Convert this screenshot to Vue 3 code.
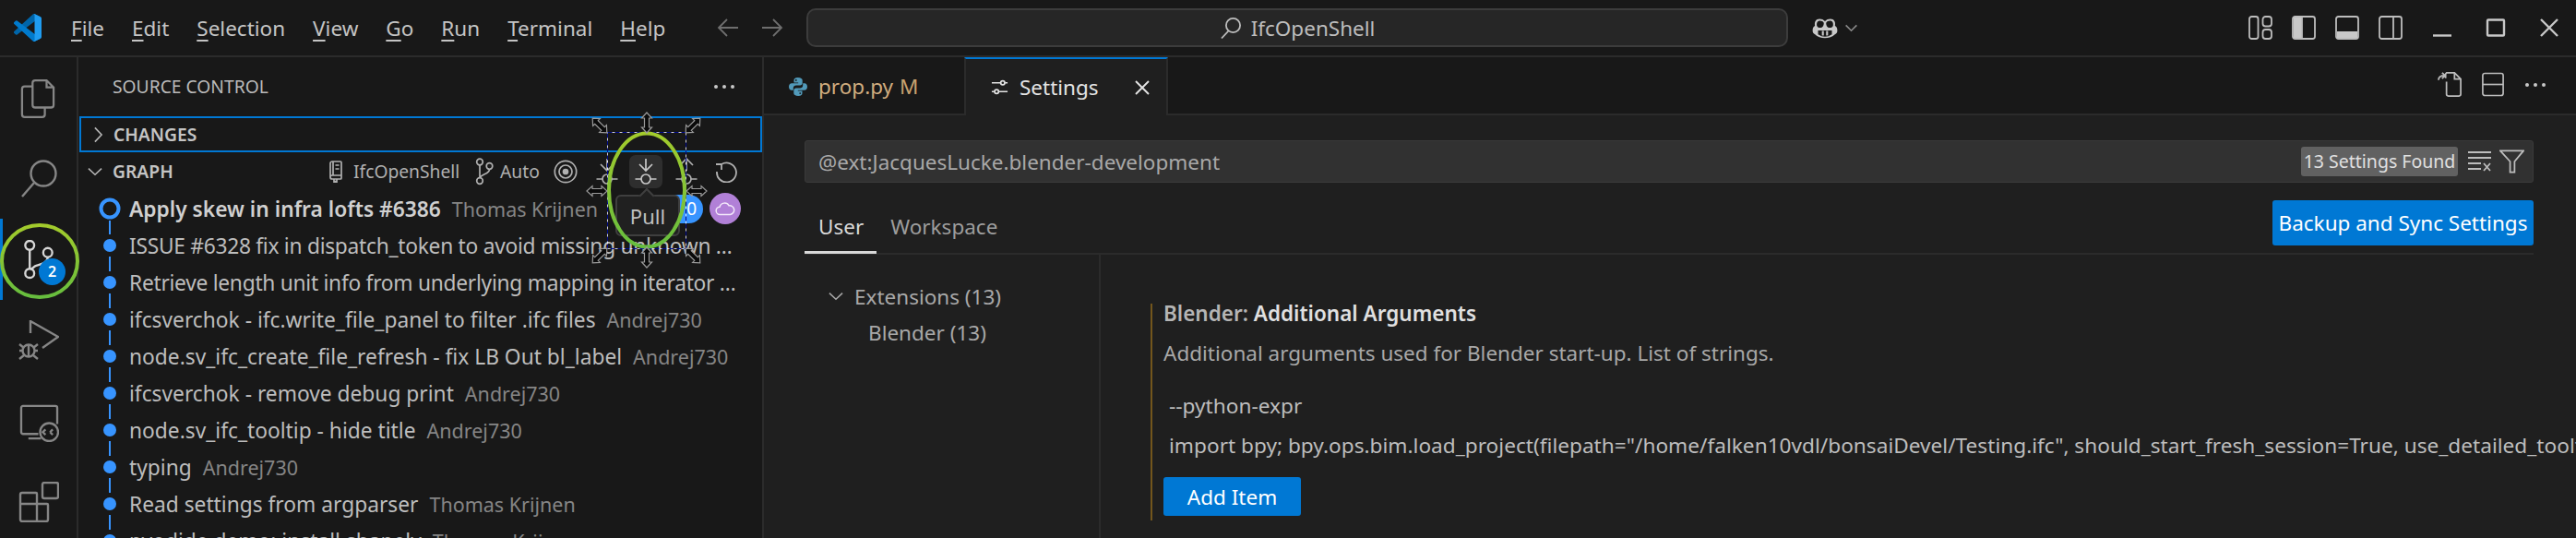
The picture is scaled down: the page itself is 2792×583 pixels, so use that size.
<script setup>
const menus = [['F','ile'],['E','dit'],['S','election'],['V','iew'],['G','o'],['R','un'],['T','erminal'],['H','elp']]
const commits = [
  { t: 'ISSUE #6328 fix in dispatch_token to avoid missing unknown …', a: '', trim: true },
  { t: 'Retrieve length unit info from underlying mapping in iterator …', a: '', trim: true },
  { t: 'ifcsverchok - ifc.write_file_panel to filter .ifc files', a: 'Andrej730' },
  { t: 'node.sv_ifc_create_file_refresh - fix LB Out bl_label', a: 'Andrej730' },
  { t: 'ifcsverchok - remove debug print', a: 'Andrej730' },
  { t: 'node.sv_ifc_tooltip - hide title', a: 'Andrej730' },
  { t: 'typing', a: 'Andrej730' },
  { t: 'Read settings from argparser', a: 'Thomas Krijnen' },
  { t: 'pyodide demo: install shapely', a: 'Thomas Krijnen' }
]
const handles = [
  { x: 650, y: 136, r: 45 }, { x: 701, y: 133, r: 90 }, { x: 751, y: 136, r: -45 },
  { x: 647, y: 207, r: 0 }, { x: 755, y: 207, r: 0 },
  { x: 650, y: 277, r: -45 }, { x: 701, y: 279, r: 90 }, { x: 751, y: 277, r: 45 }
]
</script>

<template>
  <div class="app">
    <header class="title">
      <svg class="logo" viewBox="0 0 100 100">
        <path fill="#0065a9" d="M96.46 10.8 75.86.87a6.23 6.23 0 0 0-7.11 1.2L1.3 63.59a4.17 4.17 0 0 0 0 6.16l5.51 5.01a4.17 4.17 0 0 0 5.32.24L93.37 13.37c2.73-2.07 6.63-.13 6.63 3.3v-.24c0-2.4-1.37-4.59-3.54-5.63z"/>
        <path fill="#007acc" d="m96.46 89.2-20.6 9.92a6.23 6.23 0 0 1-7.11-1.2L1.3 36.41a4.17 4.17 0 0 1 0-6.16l5.51-5.01a4.17 4.17 0 0 1 5.32-.24l81.24 61.63c2.73 2.07 6.63.13 6.63-3.3v.24c0 2.4-1.37 4.59-3.54 5.63z"/>
        <path fill="#1f9cf0" d="M75.86 99.13a6.23 6.23 0 0 1-7.11-1.21c2.31 2.31 6.25.67 6.25-2.59V4.67c0-3.26-3.94-4.9-6.25-2.59a6.23 6.23 0 0 1 7.11-1.21l20.6 9.91A6.25 6.25 0 0 1 100 16.4v67.2a6.25 6.25 0 0 1-3.54 5.63l-20.6 9.9z"/>
      </svg>
      <nav class="menu">
        <span v-for="m in menus" :key="m[1]"><u>{{ m[0] }}</u>{{ m[1] }}</span>
      </nav>
      <svg class="nav-arrow back" viewBox="0 0 24 24"><path d="M23 12H2M11 3l-9 9 9 9"/></svg>
      <svg class="nav-arrow" viewBox="0 0 24 24"><path d="M1 12h21M13 3l9 9-9 9"/></svg>
      <div class="command">
        <svg viewBox="0 0 24 24" class="cmd-icon"><circle cx="14.5" cy="9" r="7.6"/><path d="M9.5 15 2 23"/></svg>
        <span>IfcOpenShell</span>
      </div>
      <svg class="copilot" viewBox="0 0 36 30">
        <path d="M5 12c-1-5 1-9 6-9 3 0 5 1 7 3 2-2 4-3 7-3 5 0 7 4 6 9 2 1 3 3 3 5v2c0 2-1 3-3 4-3 3-8 5-13 5S8 26 5 23c-2-1-3-2-3-4v-2c0-2 1-4 3-5z"/>
        <path class="cut" d="M7.5 12c-.7-4 .8-6.5 4-6.5 2.400 0 4 1 5 2.500 0 3-1 6.500-5 6.500-2 0-3.500-1-4-2.500zM28.500 12c.7-4-.8-6.500-4-6.500-2.400 0-4 1-5 2.500 0 3 1 6.500 5 6.500 2 0 3.500-1 4-2.500zM9 18h18v5c-3 2-6 3-9 3s-6-1-9-3z"/>
        <path d="M14 18.500h2.500v6H14zM19.500 18.500H22v6h-2.500z"/>
      </svg>
      <svg class="chev" viewBox="0 0 16 10"><path d="M1.500 1.500 8 8l6.500-6.500"/></svg>
      <svg class="lay lay-first" viewBox="0 0 26 26"><rect x="1" y="1" width="9.500" height="24" rx="2.500"/><rect x="15.500" y="1" width="9.500" height="10.500" rx="3"/><rect x="15.500" y="15" width="9.500" height="10" rx="3"/></svg>
      <svg class="lay" viewBox="0 0 26 26"><rect x="1" y="1" width="24" height="24" rx="2.500"/><path class="fill" d="M2 2h9v22H2z"/><path d="M11 1v24"/></svg>
      <svg class="lay" viewBox="0 0 26 26"><rect x="1" y="1" width="24" height="24" rx="2.500"/><path class="fill" d="M2 17h22v7H2z"/></svg>
      <svg class="lay" viewBox="0 0 26 26"><rect x="1" y="1" width="24" height="24" rx="2.500"/><path d="M16 1v24"/></svg>
      <svg class="win win-min" viewBox="0 0 22 20"><path d="M1 18.500h20"/></svg>
      <svg class="win" viewBox="0 0 22 20"><rect x="2" y="1.500" width="18" height="17" rx="1"/></svg>
      <svg class="win" viewBox="0 0 22 20"><path d="m2 1 18 18M20 1 2 19"/></svg>
    </header>

    <div class="main">
      <aside class="activity">
        <svg viewBox="0 0 40 46" class="act"><path d="M14 12V5a3 3 0 0 1 3-3h13l8 8v20a3 3 0 0 1-3 3H17a3 3 0 0 1-3-3z M30 2v8h8"/><path d="M14 9H5a3 3 0 0 0-3 3v29a3 3 0 0 0 3 3h20a3 3 0 0 0 3-3v-8"/></svg>
        <svg viewBox="0 0 40 42" class="act s"><circle cx="25" cy="15" r="13.500"/><path d="M15 25 2 40"/></svg>
        <div class="git">
          <svg viewBox="0 0 33 44" class="act on"><circle cx="7" cy="6" r="5"/><circle cx="7" cy="37" r="5"/><circle cx="27" cy="14" r="5"/><path d="M7 11v21M27 19c0 7-8 8-14 10l-5 4"/></svg>
          <span class="gitbadge">2</span>
        </div>
        <svg viewBox="0 0 44 44" class="act d"><path d="M13 14V1l30 17-17 12"/><circle cx="11" cy="33" r="6.500"/><path d="M11 26v14M1 26l5 4M21 26l-5 4M1 33h4M21 33h-4M1 42l5-4M21 42l-5-4"/></svg>
        <svg viewBox="0 0 44 42" class="act r"><path d="M21 33H4a2 2 0 0 1-2-2V4a2 2 0 0 1 2-2h36a2 2 0 0 1 2 2v18M10 38h14"/><circle cx="33" cy="31" r="10"/><path d="m29 28-3 3 3 3M37 28l-3 3M34 31l3 3" /></svg>
        <svg viewBox="0 0 44 44" class="act e"><rect x="26" y="1" width="17" height="17" rx="2"/><path d="M4 12h15a1 1 0 0 1 1 1v11h11a1 1 0 0 1 1 1v16a2 2 0 0 1-2 2H4a2 2 0 0 1-2-2V14a2 2 0 0 1 2-2zM2 24h18v19M2 24"/></svg>
      </aside>

      <section class="side">
        <div class="side-head"><span>SOURCE CONTROL</span><i class="dots"><b></b><b></b><b></b></i></div>
        <div class="changes">
          <svg class="tw r1" viewBox="0 0 12 20"><path d="M2 1.500 10 10l-8 8.500"/></svg>
          <span>CHANGES</span>
        </div>
        <div class="graph">
          <svg class="tw d1" viewBox="0 0 20 12"><path d="M1.500 2 10 10l8.500-8"/></svg>
          <span class="gname">GRAPH</span>
          <svg class="gi repo" viewBox="0 0 14 24"><path d="M3 1h9a1 1 0 0 1 1 1v17a1 1 0 0 1-1 1H3a2 2 0 0 1-2-2V3a2 2 0 0 1 2-2zM1 17.500c0-1 1-1.500 2-1.500h10M4 1v15M6.500 5h4M6.500 9h4M5 20v3.500l1.500-1 1.500 1V20"/></svg>
          <span class="gtext">IfcOpenShell</span>
          <svg class="gi branch" viewBox="0 0 20 30"><circle cx="5" cy="4.500" r="3.300"/><circle cx="5" cy="25" r="3.300"/><circle cx="15.500" cy="9" r="3.300"/><path d="M5 8v13.500M15.500 12.500c0 5-8 5-10.500 9"/></svg>
          <span class="gtext auto">Auto</span>
          <svg class="gi target" viewBox="0 0 26 26"><circle cx="13" cy="13" r="11.700"/><circle cx="13" cy="13" r="7"/><circle class="solid" cx="13" cy="13" r="2.500"/></svg>
          <svg class="gi arrow fetch" viewBox="0 0 36 36"><path d="M18 4v13M11 10l7 7 7-7"/><circle cx="18" cy="26" r="5"/><path d="M6.500 26H13M23 26h6.500"/></svg>
          <span class="pullbtn"><svg class="gi" viewBox="0 0 36 36"><path d="M18 4v13M11 10l7 7 7-7"/><circle cx="18" cy="26" r="5"/><path d="M6.500 26H13M23 26h6.500"/></svg></span>
          <svg class="gi arrow push" viewBox="0 0 36 36"><path d="M18 17V4M11 11l7-7 7 7"/><circle cx="18" cy="26" r="5"/><path d="M6.500 26H13M23 26h6.500"/></svg>
          <svg class="gi refresh" viewBox="0 0 24 24"><path d="M7 4a10.500 10.500 0 1 1-5 8M7 10V4H1"/></svg>
        </div>

        <div class="row lead">
          <svg class="rail" viewBox="0 0 24 40"><circle class="ring" cx="12" cy="20" r="9.500"/><path d="M12 33v7"/></svg>
          <span class="msg bold">Apply skew in infra lofts #6386</span>
          <span class="who">Thomas Krijnen</span>
          <span class="pill">0</span>
          <span class="cloud"><svg viewBox="0 0 24 16"><path d="M6 14.500a4.500 4.500 0 0 1-.5-9A6 6 0 0 1 16.500 4 5.300 5.300 0 0 1 18 14.500z"/></svg></span>
        </div>
        <div v-for="c in commits" :key="c.t" class="row">
          <svg class="rail" viewBox="0 0 24 40"><circle class="dot" cx="12" cy="20" r="7"/><path d="M12 0v8M12 32v8"/></svg>
          <span class="msg" :class="{ trim: c.trim }">{{ c.t }}</span>
          <span v-if="c.a" class="who">{{ c.a }}</span>
        </div>

        <div class="tip"><span>Pull</span></div>
      </section>

      <section class="editor">
        <div class="tabs">
          <div class="tab idle">
            <svg class="py" viewBox="0 0 20 20"><path fill="#519aba" d="M9.800 0C6.500 0 5.500 1.400 5.500 3v2.500h4.700v.8H3.200C1.300 6.300 0 7.800 0 10s1.300 3.800 3 3.800h1.800v-2.300c0-1.700 1.400-3 3.200-3h4.200c1.300 0 2.500-1.100 2.500-2.500V3c0-1.600-1.700-3-4.900-3zM7.800 2a.9.900 0 1 1 0 1.800.9.900 0 0 1 0-1.800z"/><path fill="#519aba" d="M10.200 20c3.300 0 4.300-1.400 4.300-3v-2.500H9.800v-.8h7c1.900 0 3.200-1.500 3.200-3.700s-1.300-3.800-3-3.800h-1.800v2.300c0 1.700-1.400 3-3.200 3H7.800c-1.300 0-2.500 1.100-2.500 2.500V17c0 1.600 1.700 3 4.900 3zm2-2a.9.900 0 1 1 0-1.800.9.900 0 0 1 0 1.800z"/></svg>
            <span class="pname">prop.py</span><span class="pm">M</span>
          </div>
          <div class="tab active">
            <svg class="sl" viewBox="0 0 20 22"><path d="M1 6h10M16 6h3M1 16h3M9 16h10"/><circle cx="13.500" cy="6" r="2.300"/><circle cx="6.500" cy="16" r="2.300"/></svg>
            <span>Settings</span>
            <svg class="x" viewBox="0 0 16 16"><path d="m1 1 14 14M15 1 1 15"/></svg>
          </div>
          <div class="tab-actions">
            <svg class="ea" viewBox="0 0 28 28"><path d="M9 7V3a2 2 0 0 1 1-2h9l7 7v17a2 2 0 0 1-2 2H12a2 2 0 0 1-2-2V11M19 1v7h7M1 9c0-4 3-5 7-5M5 1l3.500 3L5 7.500"/></svg>
            <svg class="ea" viewBox="0 0 26 28"><rect x="1" y="1" width="24" height="26" rx="2.500"/><path d="M1 14h24"/></svg>
            <i class="dots"><b></b><b></b><b></b></i>
          </div>
        </div>

        <div class="settings">
          <div class="search">
            <span class="query">@ext:JacquesLucke.blender-development</span>
            <span class="found">13 Settings Found</span>
            <svg class="clr" viewBox="0 0 26 24"><path d="M1 2h25M1 8h25M1 14h14M1 20h14M18 14l7 8M25 14l-7 8"/></svg>
            <svg class="flt" viewBox="0 0 28 26"><path d="M1 1h26L17 13v12h-5V13z"/></svg>
          </div>
          <div class="scope">
            <span class="sc on">User</span>
            <span class="sc">Workspace</span>
            <button class="btn sync">Backup and Sync Settings</button>
          </div>
          <div class="body">
            <div class="tree">
              <div class="t1"><svg class="tw d2" viewBox="0 0 20 12"><path d="M1.500 2 10 10l8.500-8"/></svg>Extensions (13)</div>
              <div class="t2">Blender (13)</div>
            </div>
            <div class="detail">
              <div class="item">
                <div class="h"><span class="cat">Blender: </span><b>Additional Arguments</b></div>
                <div class="desc">Additional arguments used for Blender start-up. List of strings.</div>
                <div class="val v1">--python-expr</div>
                <div class="val">import bpy; bpy.ops.bim.load_project(filepath="/home/falken10vdl/bonsaiDevel/Testing.ifc", should_start_fresh_session=True, use_detailed_tooltips=True)</div>
                <button class="btn add">Add Item</button>
              </div>
            </div>
          </div>
        </div>
      </section>
    </div>

    <svg class="anno" viewBox="0 0 2792 583">
      <defs>
        <linearGradient id="g" x1="0" y1="0" x2="0" y2="1"><stop offset="0" stop-color="#a3cb2c"/><stop offset="1" stop-color="#66bd3e"/></linearGradient>
        <path id="ar" d="M-11 0-5-5.500v3h10v-3l6 5.500-6 5.500v-3H-5v3z"/>
      </defs>
      <rect class="sel-a" x="658.500" y="143.500" width="85" height="126"/>
      <rect class="sel-b" x="658.500" y="143.500" width="85" height="126"/>
      <ellipse class="ring-g" cx="701" cy="206" rx="41" ry="61.500"/>
      <ellipse class="ring-g" cx="43" cy="283" rx="41" ry="39"/>
      <use v-for="(h, i) in handles" :key="i" href="#ar" class="handle" :transform="`translate(${h.x} ${h.y}) rotate(${h.r})`"/>
    </svg>
  </div>
</template>

<style>
html, body { margin: 0; background: #181818; }
</style>

<style scoped>
.app {
  position: relative;
  width: 2792px;
  height: 583px;
  overflow: hidden;
  background: #181818;
  color: #ccc;
  font-family: "Noto Sans", "Open Sans", sans-serif;
  font-size: 22.5px;
}
svg { fill: none; stroke: currentColor; flex: none; display: block; }

/* title bar */
.title {
  display: flex;
  align-items: center;
  height: 60px;
  border-bottom: 2px solid #2b2b2b;
  padding-left: 15px;
  color: #bdbdbd;
}
.logo { width: 30px; height: 30px; stroke: none; }
.logo path { stroke: none; }
.menu { display: flex; gap: 30px; margin-left: 32px; width: 660px; flex: none; white-space: nowrap; color: #c4c4c4; }
.menu u { text-underline-offset: 4px; text-decoration-thickness: 2px; }
.nav-arrow { width: 24px; height: 24px; margin-left: 24px; color: #6e6e6e; stroke-width: 1.800; }
.nav-arrow.back { margin-left: 40px; }
.command {
  box-sizing: border-box;
  width: 1064px;
  height: 42px;
  flex: none;
  margin-left: 25px;
  border: 2px solid #3c3c3c;
  border-radius: 10px;
  background: #262626;
  display: flex;
  align-items: center;
  justify-content: center;
  gap: 10px;
}
.cmd-icon { width: 24px; height: 27px; stroke-width: 1.800; }
.copilot { width: 30px; height: 25px; margin-left: 25px; stroke: none; fill: #c8c8c8; }
.copilot path { stroke: none; }
.copilot .cut { fill: #181818; }
.copilot path:last-child { fill: #c8c8c8; }
.chev { width: 15px; height: 9px; margin-left: 6px; color: #8a8a8a; stroke-width: 1.800; }
.lay { width: 26px; height: 26px; margin-left: 21px; color: #bdbdbd; stroke-width: 1.800; }
.lay-first { margin-left: 423px; }
.lay .fill { fill: #c8c8c8; stroke: none; }
.win { width: 22px; height: 20px; margin-left: 36px; color: #c8c8c8; stroke-width: 2.400; }
.win-min { margin-left: 32px; }

/* main */
.main { display: flex; height: 521px; }
.activity {
  box-sizing: border-box;
  width: 85px;
  border-right: 2px solid #2b2b2b;
  display: flex;
  flex-direction: column;
  align-items: flex-start;
  color: #868686;
  flex: none;
  position: relative;
}
.act { stroke-width: 2.400; }
.activity > svg:nth-child(1) { width: 38px; height: 44px; margin: 23px 0 0 22px; }
.act.s { width: 40px; height: 42px; margin: 44px 0 0 22px; }
.git {
  position: relative;
  height: 88px;
  width: 83px;
  margin-top: 22px;
  border-left: 3px solid #0078d4;
  box-sizing: border-box;
}
.act.on { width: 33px; height: 43px; color: #d7d7d7; margin: 23px 0 0 22px; }
.gitbadge {
  position: absolute;
  left: 39px;
  top: 43px;
  width: 29px;
  height: 29px;
  border-radius: 50%;
  background: #0078d4;
  color: #fff;
  font-size: 16px;
  font-weight: 600;
  line-height: 29px;
  text-align: center;
}
.act.d { width: 44px; height: 44px; margin: 22px 0 0 20px; }
.act.r { width: 43px; height: 41px; margin: 47px 0 0 21px; }
.act.e { width: 44px; height: 44px; margin: 43px 0 0 20px; }

/* sidebar */
.side { position: relative; width: 741px; flex: none; border-right: 2px solid #2b2b2b; }
.side-head {
  height: 64px;
  display: flex;
  align-items: center;
  padding: 0 30px 1px 37px;
  box-sizing: border-box;
  font-size: 19.250px;
  color: #bbb;
  justify-content: space-between;
}
.dots { display: flex; gap: 5px; }
.dots b { width: 4px; height: 4px; border-radius: 50%; background: #c8c8c8; }
.changes {
  height: 39px;
  box-sizing: border-box;
  margin-left: 1px;
  border: 2px solid #0078d4;
  display: flex;
  align-items: center;
  font-size: 19.250px;
  font-weight: 600;
  color: #c4c4c4;
}
.tw { color: #b5b5b5; stroke-width: 1.800; }
.r1 { width: 11px; height: 18px; margin: 0 11px 0 13px; }
.graph {
  display: flex;
  align-items: center;
  height: 41px;
  font-size: 19.250px;
  color: #b0b0b0;
  position: relative;
}
.d1 { width: 18px; height: 10px; margin: 0 10px 0 9px; }
.gname { font-weight: 600; color: #c4c4c4; width: 235px; }
.gi { color: #b0b0b0; stroke-width: 1.700; }
.repo { width: 14px; height: 24px; margin-right: 12px; }
.gtext { white-space: nowrap; width: 132px; }
.branch { width: 20px; height: 30px; }
.auto { width: 58px; margin-left: 7px; }
.target { width: 26px; height: 26px; }
.target .solid { fill: #b0b0b0; }
.arrow { width: 36px; height: 36px; }
.fetch { margin-left: 14px; }
.pullbtn { width: 36px; height: 36px; margin-left: 6px; border-radius: 7px; background: #2e2e2e; }
.pullbtn .gi { width: 36px; height: 36px; color: #c8c8c8; }
.push { margin-left: 8px; }
.refresh { width: 24px; height: 24px; margin-left: 13px; stroke-width: 1.800; }

.row {
  display: flex;
  align-items: center;
  height: 40px;
  padding-left: 22px;
  padding-right: 23px;
  white-space: nowrap;
  color: #bdbdbd;
  font-size: 22.750px;
}
.rail { width: 24px; height: 40px; margin-right: 9px; color: #3794ff; stroke-width: 2; }
.rail .dot { fill: #3794ff; stroke: none; }
.rail .ring { stroke-width: 4; }
.msg { min-width: 0; }
.trim { letter-spacing: -.27px; }
.bold { font-weight: 600; color: #d0d0d0; flex: none; }
.who { margin-left: 12px; color: #858585; flex: none; font-size: 21.500px; }
.pill {
  margin-left: auto;
  width: 42px;
  height: 31px;
  border-radius: 16px;
  background: #3794ff;
  color: #fff;
  line-height: 31px;
  text-align: right;
  padding-right: 7px;
  box-sizing: border-box;
  font-size: 19px;
}
.cloud {
  width: 34px;
  height: 34px;
  margin-left: 7px;
  border-radius: 50%;
  background: #b180d7;
  display: flex;
  align-items: center;
  justify-content: center;
  color: #f3e8fa;
}
.cloud svg { width: 22px; height: 15px; stroke-width: 1.600; }

.tip {
  position: absolute;
  left: 582px;
  top: 149px;
  width: 70px;
  height: 45px;
  box-sizing: border-box;
  background: #202020;
  border: 2px solid #3f3f3f;
  border-radius: 6px;
  display: flex;
  align-items: center;
  justify-content: center;
  color: #c0c0c0;
  font-size: 22px;
}
.tip::before {
  content: "";
  position: absolute;
  left: 26px;
  top: -7px;
  width: 10px;
  height: 10px;
  background: #202020;
  border-left: 2px solid #3f3f3f;
  border-top: 2px solid #3f3f3f;
  transform: rotate(45deg);
}

/* editor */
.editor { flex: 1; min-width: 0; background: #1f1f1f; display: flex; flex-direction: column; }
.tabs { height: 63px; display: flex; background: #181818; box-sizing: border-box; border-bottom: 2px solid #2b2b2b; }
.tab { display: flex; align-items: center; height: 63px; box-sizing: border-box; white-space: nowrap; }
.idle { width: 217px; padding-left: 27px; }
.py { width: 20px; height: 20px; stroke: none; }
.py path { stroke: none; }
.pname { margin-left: 12px; color: #d1ad7f; }
.pm { margin-left: 7px; color: #c8a16f; }
.active {
  width: 221px;
  padding-left: 27px;
  background: #1f1f1f;
  border-top: 2px solid #0078d4;
  border-left: 2px solid #2b2b2b;
  border-right: 2px solid #2b2b2b;
  color: #e4e4e4;
}
.sl { width: 19px; height: 21px; stroke-width: 1.800; }
.active span { margin-left: 12px; width: 125px; }
.x { width: 16px; height: 16px; stroke-width: 1.900; }
.tab-actions { margin-left: auto; display: flex; align-items: center; padding-right: 33px; gap: 21px; color: #bdbdbd; padding-bottom: 2px; }
.ea { width: 27px; height: 27px; stroke-width: 1.800; }
.ea + .ea { width: 24px; }
.tab-actions .dots { margin-left: 2px; }
.settings { padding: 27px 46px 0 44px; flex: 1; display: flex; flex-direction: column; min-height: 0; }
.search {
  height: 46px;
  box-sizing: border-box;
  background: #313131;
  border: 1px solid #3a3a3a;
  border-radius: 3px;
  display: flex;
  align-items: center;
  padding-left: 14px;
  color: #a8a8a8;
}
.query { flex: 1; white-space: nowrap; }
.found {
  width: 170px;
  height: 32px;
  line-height: 32px;
  text-align: center;
  background: #616161;
  border-radius: 3px;
  color: #e0e0e0;
  font-size: 19.500px;
  white-space: nowrap;
}
.clr { width: 26px; height: 24px; margin-left: 10px; color: #bdbdbd; stroke-width: 1.800; }
.flt { width: 27px; height: 26px; margin: 0 9px; color: #bdbdbd; stroke-width: 1.800; }
.scope {
  height: 78px;
  box-sizing: border-box;
  display: flex;
  align-items: center;
  border-bottom: 2px solid #2b2b2b;
  position: relative;
}
.sc { padding: 17px 14px 0 15px; height: 62px; box-sizing: border-box; margin-top: 16px; color: #9d9d9d; white-space: nowrap; }
.sc.on { color: #d8d8d8; border-bottom: 3px solid #d8d8d8; }
.btn {
  border: 0;
  border-radius: 3px;
  background: #0078d4;
  color: #fff;
  font: inherit;
  padding: 0;
}
.sync { width: 283px; height: 49px; margin-left: auto; margin-top: 11px; white-space: nowrap; }
.body { display: flex; flex: 1; min-height: 0; }
.tree { width: 321px; flex: none; border-right: 2px solid #2b2b2b; box-sizing: border-box; padding-top: 25px; color: #a8a8a8; }
.t1 { height: 40px; display: flex; align-items: center; padding-left: 25px; }
.d2 { width: 18px; height: 10px; margin-right: 11px; color: #a8a8a8; }
.t2 { height: 40px; line-height: 40px; padding-left: 69px; }
.detail { flex: 1; min-width: 0; padding: 53px 0 0 54px; margin-right: -46px; overflow: hidden; }
.item { border-left: 2px solid #73561c; padding-left: 12px; height: 235px; box-sizing: border-box; white-space: nowrap; }
.h { line-height: 22px; color: #b5b5b5; }
.h .cat { font-weight: 600; }
.h b { font-weight: 600; color: #e0e0e0; }
.desc { margin-top: 20px; line-height: 24px; color: #a8a8a8; }
.val { padding-left: 6px; line-height: 43px; color: #bdbdbd; font-size: 22.650px; }
.v1 { margin-top: 23px; }
.add { display: block; width: 149px; height: 42px; margin-top: 13px; }

/* annotation overlay */
.anno { position: absolute; left: 0; top: 0; width: 2792px; height: 583px; pointer-events: none; }
.ring-g { stroke: url(#g); stroke-width: 4; }
.sel-a { stroke: #fff; stroke-width: 1; opacity: .8; }
.sel-b { stroke: #000a8a; stroke-width: 1; stroke-dasharray: 5 3; }
.handle { fill: #0a0a0a; stroke: #9a9a9a; stroke-width: 1.200; }
</style>
